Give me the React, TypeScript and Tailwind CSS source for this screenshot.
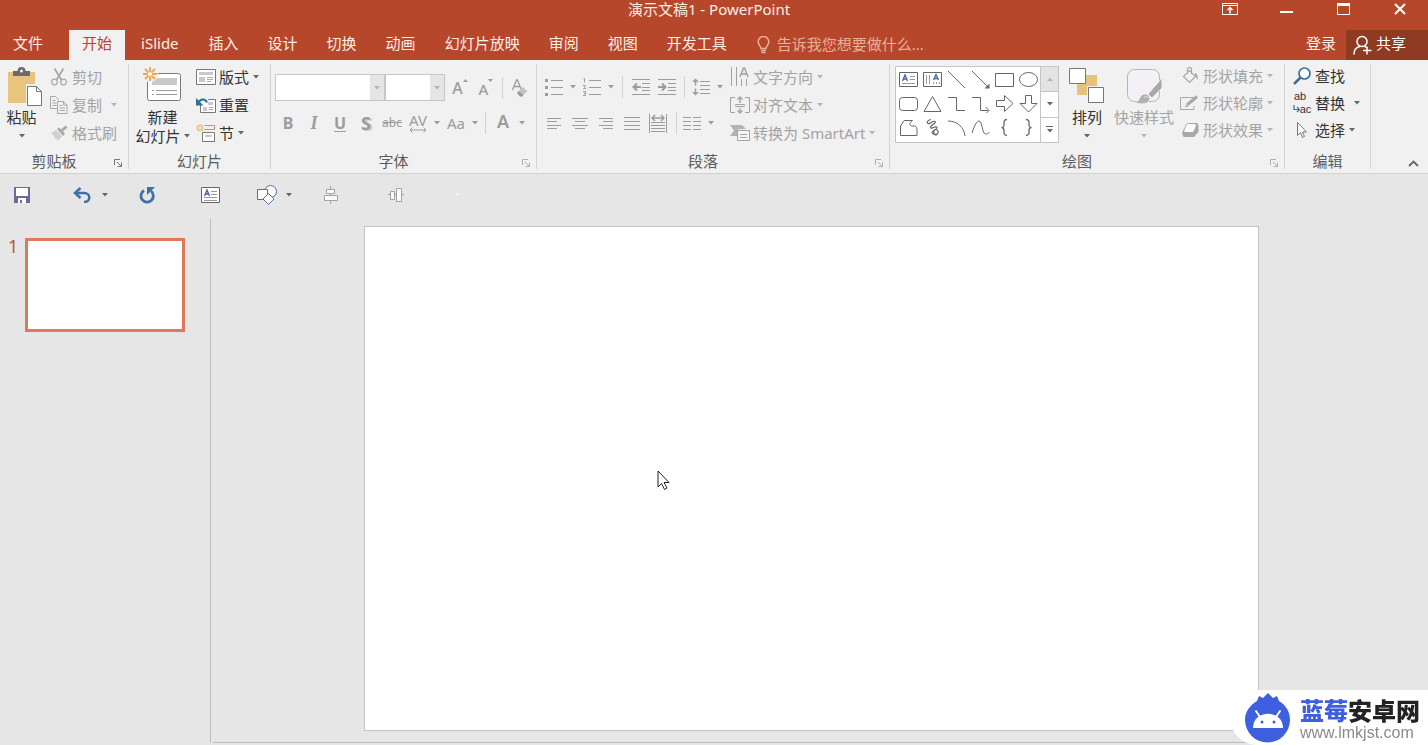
import type { ReactNode } from 'react';
import clsx from 'clsx';

const TABS = ['文件', '开始', 'iSlide', '插入', '设计', '切换', '动画', '幻灯片放映', '审阅', '视图', '开发工具'];

export default function App() {
  return (
    <div className="flex min-h-screen flex-col overflow-hidden bg-[#e6e6e6] font-['Noto_Sans','Noto_Sans_CJK_SC',sans-serif] text-[15px] leading-[20px] text-[#444444]">
      <TitleBar />
      <TabBar />
      <Ribbon />
      <QuickAccess />
      <Workspace />
      <Watermark />
    </div>
  );
}

/* ---------- shared bits ---------- */

function Svg({
  w,
  h,
  className,
  children,
}: {
  w: number;
  h: number;
  className?: string;
  children: ReactNode;
}) {
  return (
    <svg
      width={w}
      height={h}
      viewBox={`0 0 ${w} ${h}`}
      fill="none"
      stroke="currentColor"
      aria-hidden="true"
      className={clsx('shrink-0', className)}
    >
      {children}
    </svg>
  );
}

function Caret({ className }: { className?: string }) {
  return (
    <Svg w={6} h={4} className={className}>
      <path d="M0 0h6L3 3.5z" fill="currentColor" stroke="none" />
    </Svg>
  );
}

function CaretButton({ label }: { label: string }) {
  return (
    <button type="button" aria-label={label} className="flex h-[26px] w-[12px] items-center justify-center">
      <Caret />
    </button>
  );
}

function Tool({ label, children }: { label: string; children: ReactNode }) {
  return (
    <button type="button" aria-label={label} className="flex h-[26px] w-[26px] shrink-0 items-center justify-center">
      {children}
    </button>
  );
}

function RowButton({
  icon,
  label,
  caret,
  disabled,
  tall,
}: {
  icon: ReactNode;
  label: string;
  caret?: 'near' | 'far';
  disabled?: boolean;
  tall?: boolean;
}) {
  return (
    <button
      type="button"
      className={clsx(
        'flex items-center whitespace-nowrap',
        tall ? 'h-[28px]' : 'h-[27px]',
        disabled ? 'text-[#a3a3a3]' : 'text-[#333333]',
      )}
    >
      <span className="mr-[3px] flex w-[20px] justify-center">{icon}</span>
      {label}
      {caret && (
        <Caret
          className={clsx(caret === 'far' ? 'ml-[9px]' : 'ml-1', disabled ? 'text-[#b5b5b5]' : 'text-[#666666]')}
        />
      )}
    </button>
  );
}

function VLine({ className }: { className?: string }) {
  return <span className={clsx('h-[22px] w-px shrink-0 bg-[#d2d2d2]', className)} />;
}

function Group({
  title,
  width,
  launcher,
  children,
}: {
  title: string;
  width: string;
  launcher?: 'on' | 'off';
  children: ReactNode;
}) {
  return (
    <>
      <section aria-label={title} className={clsx('flex shrink-0 flex-col', width)}>
        <div className="flex h-[92px] items-start">{children}</div>
        <div className="flex h-[18px] items-center">
          <span className="flex-1 text-center text-[#5c5c5c]">{title}</span>
          {launcher && (
            <button
              type="button"
              aria-label={`${title}选项`}
              className={clsx('flex w-[20px] justify-center', launcher === 'on' ? 'text-[#777777]' : 'text-[#b0b0b0]')}
            >
              <Svg w={8} h={8} className="mt-1">
                <path d="M.5 6V.5H6M3 3l4 4M7.500 3.500v4h-4" />
              </Svg>
            </button>
          )}
        </div>
      </section>
      <span className="my-1 w-px shrink-0 bg-[#d4d4d4]" />
    </>
  );
}

/* ---------- title and tabs ---------- */

function TitleBar() {
  return (
    <header className="grid h-[30px] grid-cols-[1fr_auto_1fr] items-start bg-[#b7472a] text-[#fdeee6]">
      <span />
      <h1 className="pr-[10px] leading-[18px]">演示文稿1 - PowerPoint</h1>
      <div className="flex h-[18px] justify-end text-white">
        <button type="button" aria-label="功能区显示选项" className="flex w-[57px] items-center justify-center">
          <Svg w={16} h={12}>
            <path d="M.5.5h15v11H.5zM.5 2.500h15" />
            <path d="M8 10.500V5M5.500 7 8 4.500 10.500 7" strokeWidth="1.500" />
          </Svg>
        </button>
        <button type="button" aria-label="最小化" className="flex w-[57px] items-center justify-center">
          <Svg w={13} h={12}>
            <path d="M0 9h13" strokeWidth="2" />
          </Svg>
        </button>
        <button type="button" aria-label="最大化" className="flex w-[57px] items-center justify-center">
          <Svg w={13} h={12}>
            <path d="M.5 1.500h12v10H.5z" />
            <path d="M0 1.500h13" strokeWidth="3" />
          </Svg>
        </button>
        <button type="button" aria-label="关闭" className="flex w-[56px] items-center justify-center">
          <Svg w={12} h={12}>
            <path d="m1 1 10 10M11 1 1 11" strokeWidth="2" />
          </Svg>
        </button>
      </div>
    </header>
  );
}

function TabBar() {
  return (
    <nav className="flex h-[30px] items-stretch bg-[#b7472a] text-[#fdeee6]">
      <div role="tablist" className="flex gap-px">
        {TABS.map((tab) => (
          <button
            key={tab}
            type="button"
            role="tab"
            aria-selected={tab === '开始'}
            className={clsx(
              'pb-[4px] whitespace-nowrap',
              tab === '文件' && 'mr-[12px] px-[13px]',
              tab === '开始' && 'bg-[#f1f1f1] px-[13px] text-[#b7472a]',
              tab === 'iSlide' && 'px-[15px]',
              !['文件', '开始', 'iSlide'].includes(tab) && 'px-[14px]',
            )}
          >
            {tab}
          </button>
        ))}
      </div>
      <label className="ml-4 flex flex-1 items-center gap-[7px] text-[#eab09c]">
        <Svg w={13} h={18}>
          <path d="M4 12.500c0-2.500-2.800-3.500-2.800-6.700a5.300 5.300 0 0 1 10.600 0c0 3.200-2.800 4.200-2.800 6.700z" strokeWidth="1.500" />
          <path d="M4 14.500h5M4.500 16.500h4" strokeWidth="1.500" />
        </Svg>
        <input
          type="text"
          aria-label="操作说明搜索"
          placeholder="告诉我您想要做什么..."
          className="min-w-0 flex-1 bg-transparent pb-[2px] outline-none placeholder:text-[#eab09c]"
        />
      </label>
      <button type="button" className="pb-[4px] pr-[10px]">
        登录
      </button>
      <button type="button" className="flex items-center gap-1 bg-[#8f3a22] pl-[7px] pr-[22px] text-white">
        <Svg w={19} h={20}>
          <circle cx="9" cy="6.500" r="5" strokeWidth="1.500" />
          <path d="M1 19.500c0-4.500 2.500-7.500 6-8M11.500 11.500c1 .2 1.500.5 2 1M14 11.500v8M10 15.500h8.500" strokeWidth="1.500" />
        </Svg>
        <span className="pb-[4px]">共享</span>
      </button>
    </nav>
  );
}

/* ---------- ribbon ---------- */

function Ribbon() {
  return (
    <div className="flex h-[114px] items-stretch border-b border-[#d2d2d2] bg-[#f1f1f1]">
      <ClipboardGroup />
      <SlidesGroup />
      <FontGroup />
      <ParagraphGroup />
      <DrawingGroup />
      <EditingGroup />
      <div className="flex flex-1 items-end justify-end pb-[6px] pr-[9px]">
        <button type="button" aria-label="折叠功能区">
          <Svg w={11} h={7} className="text-[#666666]">
            <path d="M1 6l4.500-4.500L10 6" strokeWidth="1.800" />
          </Svg>
        </button>
      </div>
    </div>
  );
}

function BigButton({
  icon,
  lines,
  className,
  disabled,
}: {
  icon: ReactNode;
  lines: string[];
  className: string;
  disabled?: boolean;
}) {
  return (
    <button
      type="button"
      className={clsx('flex shrink-0 flex-col items-center pt-[7px]', className, disabled ? 'text-[#a3a3a3]' : 'text-[#333333]')}
    >
      <span className="h-[40px]">{icon}</span>
      <span>{lines[0]}</span>
      <span className="flex h-[18px] items-center gap-[3px] whitespace-nowrap">
        {lines[1]}
        <Caret className={disabled ? 'text-[#b5b5b5]' : 'text-[#666666]'} />
      </span>
    </button>
  );
}

function ClipboardGroup() {
  return (
    <Group title="剪贴板" width="w-[128px]" launcher="on">
      <BigButton
        className="w-[49px] pr-[6px]"
        lines={['粘贴']}
        icon={
          <Svg w={34} h={40} className="ml-[6px]">
            <path d="M0 5h27v31H0z" fill="#e8c47c" stroke="none" />
            <path d="M5 9V4h4.500a4 4 0 0 1 8 0H22v5z" fill="#6b6b6b" stroke="none" />
            <circle cx="13.500" cy="4" r="1.500" fill="#f1f1f1" stroke="none" />
            <path d="M18 17h11l6 6v17H18z" fill="#f1f1f1" stroke="none" />
            <path d="M19.500 19.500h9l5 5v14h-14z" fill="#fff" stroke="#777" />
            <path d="M28.500 19.500v5h5" stroke="#777" />
          </Svg>
        }
      />
      <div className="flex flex-col pt-[3px]">
        <RowButton
          tall
          disabled
          label="剪切"
          icon={
            <Svg w={16} h={18} className="text-[#a8a8a8]">
              <path d="M3.500.5l7 11.500M12.500.5l-7 11.500" strokeWidth="1.800" />
              <circle cx="3.500" cy="14" r="2.800" strokeWidth="1.200" />
              <circle cx="12.500" cy="14" r="2.800" strokeWidth="1.200" />
            </Svg>
          }
        />
        <RowButton
          tall
          disabled
          label="复制"
          caret="far"
          icon={
            <Svg w={18} h={18} className="text-[#a8a8a8]">
              <path d="M7.500 12.500h-7V.5h5l3 3v1M2.500 4.500h3M2.500 7h4M2.500 9.500h4" />
              <path d="M7.500 5.500h6l3.500 3.500v8.500H7.500zM13.500 5.500V9H17M9.500 9.500h2.500M9.500 12h5.500M9.500 14.500h5.500" />
            </Svg>
          }
        />
        <RowButton
          tall
          disabled
          label="格式刷"
          icon={
            <Svg w={17} h={16} className="text-[#a8a8a8]">
              <path d="M0 8l5-3 6 6-4 5-2-3-1 1-1-3z" fill="#cfcfcf" stroke="none" />
              <path d="M6 4l2-1.500 6 6L12 11z" fill="currentColor" stroke="none" />
              <path d="M11 5.500l4.500-4" strokeWidth="3" />
            </Svg>
          }
        />
      </div>
    </Group>
  );
}

function SlidesGroup() {
  return (
    <Group title="幻灯片" width="w-[141px]">
      <BigButton
        className="w-[67px]"
        lines={['新建', '幻灯片']}
        icon={
          <Svg w={40} h={36} className="mr-[2px]">
            <rect x="5.500" y="6.500" width="33" height="27" rx="2" fill="#fff" stroke="#7a7a7a" />
            <path d="M10 11h25v7H10z" fill="#c9c9c9" stroke="none" />
            <path d="M10 23.500h2M14 23.500h21M10 27.500h2M14 27.500h21" stroke="#999" />
            <circle cx="8" cy="7" r="8" fill="#f1f1f1" stroke="none" />
            <path d="M8 0v4M8 10v4M1 7h4M11 7h4M3 2l3 3M10 9l3 3M13 2l-3 3M6 9l-3 3" stroke="#eda550" strokeWidth="1.800" />
            <circle cx="8" cy="7" r="2.500" fill="#fff" stroke="#eda550" />
          </Svg>
        }
      />
      <div className="flex flex-col pt-[3px]">
        <RowButton
          tall
          label="版式"
          caret="near"
          icon={
            <Svg w={20} h={16} className="text-[#777777]">
              <path d="M.5.5h19v15H.5z" fill="#fff" />
              <path d="M3 3h14v3H3zM3 8h6v5H3z" fill="#c9c9c9" stroke="none" />
              <path d="M11 8.500h6M11 10.500h6M11 12.500h4" stroke="#aaa" />
            </Svg>
          }
        />
        <RowButton
          tall
          label="重置"
          icon={
            <Svg w={20} h={17} className="text-[#777777]">
              <path d="M4.500 2.500h15v13h-15z" fill="#fff" />
              <path d="M12 5h5v3h-5zM7 10h4v4H7z" fill="#c9c9c9" stroke="none" />
              <path d="M13 10.500h4M13 12.500h4" stroke="#aaa" />
              <path d="M2 7c1-5 7-6.500 9-1.500" stroke="#f1f1f1" strokeWidth="5" />
              <path d="M2 7c1-5 7-6.500 9-1.500" stroke="#2f7096" strokeWidth="2" />
              <path d="M0 1v7.500h7.500z" fill="#2f7096" stroke="none" />
            </Svg>
          }
        />
        <RowButton
          tall
          label="节"
          caret="near"
          icon={
            <Svg w={20} h={18} className="text-[#777777]">
              <path d="M8.500 1.500h10v4h-10" stroke="#e08a5a" />
              <path d="M6.500 8.500h12v9h-12z" fill="#fff" />
              <path d="M9 11h7v2H9z" fill="#c9c9c9" stroke="none" />
              <path d="M4 0v3M4 5v3M0 4h3M5 4h3M1 1l2 2M5 5l2 2M7 1L5 3M3 5L1 7" stroke="#eda550" />
            </Svg>
          }
        />
      </div>
    </Group>
  );
}

function Combo({ label, width }: { label: string; width: string }) {
  return (
    <div className={clsx('relative h-[27px]', width)}>
      <select aria-label={label} disabled className="h-full w-full appearance-none border border-[#c6c6c6] bg-white" />
      <span className="pointer-events-none absolute inset-y-px right-px flex w-[14px] items-center justify-center bg-[#e5e5e5] text-[#b5b5b5]">
        <Caret />
      </span>
    </div>
  );
}

function FontGroup() {
  return (
    <Group title="字体" width="w-[265px]" launcher="off">
      <div className="flex flex-col gap-[9px] pl-1 pt-[14px] text-[#9c9c9c]">
        <div className="flex items-center">
          <Combo label="字体" width="w-[110px]" />
          <Combo label="字号" width="w-[60px]" />
          <span className="flex pl-[2px]">
            <Tool label="增大字号">
              <span className="text-[16px] font-medium">A</span>
              <Svg w={5} h={3} className="mb-[14px]">
                <path d="M0 3h5L2.500 0z" fill="currentColor" stroke="none" />
              </Svg>
            </Tool>
            <Tool label="减小字号">
              <span className="pt-[2px] text-[15px] font-medium">A</span>
              <Svg w={5} h={3} className="mb-[14px]">
                <path d="M0 0h5L2.500 3z" fill="currentColor" stroke="none" />
              </Svg>
            </Tool>
          </span>
          <VLine className="ml-[3px]" />
          <span className="ml-1 flex">
            <Tool label="清除所有格式">
              <Svg w={16} h={18}>
                <path d="M.5 11L4.500 1h1l3.500 9M2 7.500h6" strokeWidth="1.300" />
                <path d="M5 14l5.500-6 5 4-5.500 5.500H8z" fill="#c4c4c4" stroke="none" />
                <path d="M5 14l2-2 4.500 4L10 17.500H8z" fill="currentColor" stroke="none" />
              </Svg>
            </Tool>
          </span>
        </div>
        <div className="flex items-center text-[16px]">
          <Tool label="加粗">
            <b>B</b>
          </Tool>
          <Tool label="倾斜">
            <i className="font-['Liberation_Serif',serif] text-[18px] font-bold">I</i>
          </Tool>
          <Tool label="下划线">
            <span className="border-b border-current font-bold leading-[16px]">U</span>
          </Tool>
          <Tool label="文字阴影">
            <b className="text-[18px] [text-shadow:2px_1px_1px_#c8c8c8]">S</b>
          </Tool>
          <Tool label="删除线">
            <s className="text-[12px]">abc</s>
          </Tool>
          <Tool label="字符间距">
            <span className="flex flex-col items-center">
              <span className="text-[15px] leading-[13px]">AV</span>
              <Svg w={18} h={6}>
                <path d="M1 3h16M3.500.5L1 3l2.500 2.500M14.500.5L17 3l-2.500 2.500" />
              </Svg>
            </span>
          </Tool>
          <CaretButton label="字符间距选项" />
          <Tool label="更改大小写">
            <span className="text-[15px]">Aa</span>
          </Tool>
          <CaretButton label="更改大小写选项" />
          <VLine className="mx-1" />
          <Tool label="字体颜色">
            <span className="pb-1 text-[18px] font-semibold">A</span>
          </Tool>
          <CaretButton label="字体颜色选项" />
        </div>
      </div>
    </Group>
  );
}

function ParagraphGroup() {
  return (
    <Group title="段落" width="w-[352px]" launcher="off">
      <div className="flex w-[193px] flex-col gap-[10px] pl-1 pt-[14px] text-[#9c9c9c]">
        <div className="flex h-[26px] items-center">
          <Tool label="项目符号">
            <Svg w={18} h={17}>
              <path d="M6 1.500h12M6 8.500h12M6 15.500h12" />
              <path d="M0 1.500h3M0 8.500h3M0 15.500h3" strokeWidth="3" />
            </Svg>
          </Tool>
          <CaretButton label="项目符号选项" />
          <Tool label="编号">
            <Svg w={18} h={18}>
              <path d="M6 2.500h12M6 9.500h12M6 16.500h12" />
              <path d="M.5 1l1-.5v4M0 7.500h2.500v1L.5 10.500h2.500M0 13.500h2.500v4H0M1 15.500h1.500" />
            </Svg>
          </Tool>
          <CaretButton label="编号选项" />
          <VLine className="ml-[5px]" />
          <span className="ml-[5px] flex">
            <Tool label="降低列表级别">
              <Svg w={18} h={16}>
                <path d="M0 .5h18M10 4.500h8M10 8.500h8M10 11.500h8M0 15.500h18" />
                <path d="M2 8h7M5 4.500L1.500 8 5 11.500" strokeWidth="2" />
              </Svg>
            </Tool>
            <Tool label="提高列表级别">
              <Svg w={18} h={16}>
                <path d="M0 .5h18M10 4.500h8M10 8.500h8M10 11.500h8M0 15.500h18" />
                <path d="M0 8h7M4 4.500L7.500 8 4 11.500" strokeWidth="2" />
              </Svg>
            </Tool>
          </span>
          <VLine className="ml-1" />
          <span className="ml-[3px] flex">
            <Tool label="行距">
              <Svg w={18} h={18}>
                <path d="M8 3.500h10M8 7.500h10M8 11.500h10M8 15.500h10" />
                <path d="M3.500 1.500v6M1 4l2.500-2.500L6 4M3.500 10.500v6M1 14l2.500 2.500L6 14" strokeWidth="1.500" />
              </Svg>
            </Tool>
            <CaretButton label="行距选项" />
          </span>
        </div>
        <div className="flex items-center">
          <Tool label="左对齐">
            <Svg w={14} h={11}>
              <path d="M0 .5h14M0 3.500h10M0 7.500h14M0 10.500h10" />
            </Svg>
          </Tool>
          <Tool label="居中">
            <Svg w={16} h={11}>
              <path d="M0 .5h16M3 3.500h10M0 7.500h16M3 10.500h10" />
            </Svg>
          </Tool>
          <Tool label="右对齐">
            <Svg w={14} h={11}>
              <path d="M0 .5h14M4 3.500h10M0 7.500h14M4 10.500h10" />
            </Svg>
          </Tool>
          <Tool label="两端对齐">
            <Svg w={16} h={13}>
              <path d="M0 .5h16M0 4.500h16M0 8.500h16M0 12.500h16" />
            </Svg>
          </Tool>
          <Tool label="分散对齐">
            <Svg w={18} h={19}>
              <path d="M.5 0v19M17.500 0v19M2 8.500h14M2 11.500h14M2 14.500h14M2 17.500h14" />
              <path d="M3 4h12M6 1L3 4l3 3M12 1l3 3-3 3" strokeWidth="1.500" />
            </Svg>
          </Tool>
          <VLine className="ml-[5px] mr-[2px]" />
          <Tool label="分栏">
            <Svg w={18} h={13}>
              <path d="M0 .5h8M0 4.500h8M0 8.500h8M0 12.500h8M10 .5h8M10 4.500h8M10 8.500h8M10 12.500h8" />
            </Svg>
          </Tool>
          <CaretButton label="分栏选项" />
        </div>
      </div>
      <div className="flex flex-col pt-[3px]">
        <RowButton
          tall
          disabled
          label="文字方向"
          caret="near"
          icon={
            <Svg w={20} h={20} className="text-[#a3a3a3]">
              <path d="M1.500 0v19M6.500 0v19M11.500 12v7M16.500 12v7" />
              <path d="M10 10l3.500-9h1L18 10M11 7h6" strokeWidth="1.500" />
            </Svg>
          }
        />
        <RowButton
          tall
          disabled
          label="对齐文本"
          caret="near"
          icon={
            <Svg w={20} h={18} className="text-[#a3a3a3]">
              <path d="M5 1.500H.5v15H5M15 1.500h4.500v15H15M5 8.500h10M5 10.500h10" />
              <path d="M10 1v6M7.500 3.500L10 1l2.500 2.500M10 12v5M7.500 14.500L10 17l2.500-2.500" strokeWidth="1.400" />
            </Svg>
          }
        />
        <RowButton
          tall
          disabled
          label="转换为 SmartArt"
          caret="near"
          icon={
            <Svg w={20} h={16} className="text-[#a3a3a3]">
              <path d="M0 0h12l4 4H8l-1 7H0l4-5.500z" fill="#b3b3b3" stroke="none" />
              <path d="M7.500 5.500h12v10h-12z" fill="#f6f6f6" />
              <path d="M10 9.500h7M10 12.500h7" />
            </Svg>
          }
        />
      </div>
    </Group>
  );
}

const SHAPES: { name: string; art: ReactNode }[] = [
  {
    name: '文本框',
    art: (
      <>
        <path d="M.5 2.500h18v14H.5z" />
        <path d="M3.500 11L6 5l2.500 6M4.500 9h3" stroke="#3f669e" strokeWidth="1.300" />
        <path d="M11 6.500h5M11 9.500h5M3 13.500h13" stroke="#999" />
      </>
    ),
  },
  {
    name: '竖排文本框',
    art: (
      <>
        <path d="M.5 2.500h18v14H.5z" />
        <path d="M10.500 10L13 4.500l2.500 5.500M11.500 8.500h3" stroke="#3f669e" strokeWidth="1.300" />
        <path d="M3.500 5v9M6.500 5v9M10.500 12v2M13.500 12v2M16.500 12v2" stroke="#999" />
      </>
    ),
  },
  { name: '直线', art: <path d="M1 1l17 17" /> },
  {
    name: '箭头',
    art: (
      <>
        <path d="M1 1l16.500 16.500" />
        <path d="M18.500 18.500v-5l-5 5z" fill="currentColor" stroke="none" />
      </>
    ),
  },
  { name: '矩形', art: <path d="M.5 3.500h18v13H.5z" /> },
  { name: '椭圆', art: <ellipse cx="9.500" cy="9.500" rx="9" ry="7" /> },
  { name: '圆角矩形', art: <rect x=".5" y="3.500" width="18" height="13" rx="3" /> },
  { name: '三角形', art: <path d="M9.500 2.500l8.500 15H1z" /> },
  { name: '肘形连接符', art: <path d="M1 3.500h8.500v13H18" /> },
  {
    name: '肘形箭头',
    art: (
      <>
        <path d="M1 3.500h8.500v13H17" />
        <path d="M14.500 13l3.500 3.500-3.500 3.500" />
      </>
    ),
  },
  { name: '右箭头', art: <path d="M1.500 6.500h8v-5l8.500 8-8.500 8v-5h-8z" /> },
  { name: '下箭头', art: <path d="M6.500 1.500h6v8H18l-8.500 8.500L1 9.500h5.500z" /> },
  { name: '任意多边形', art: <path d="M1.500 17.500V8L5 2.500h8.500c-4 3-3 5.500 0 5.500 3-.5 4.500 1 4.500 3.500v6z" /> },
  {
    name: '自由曲线',
    art: <path d="M8 1.500C5 2 3 4.500 5 5.500s5-3.500 7-2-5 4-4.500 6 6-2 6.500 0-5.500 3-5 5 5 3 6 .5-2-4.500-3.500-3-.5 4.500 2 5.500" strokeWidth="1.200" />,
  },
  { name: '弧形', art: <path d="M1 3c9 0 16 6 17 15" /> },
  { name: '曲线', art: <path d="M1 15C4 6 6 3 8 3c3.500 0 3 13 6.500 13 1.500 0 2.500-.5 4-1.500" /> },
  { name: '左大括号', art: <path d="M12 1.500C8.500 1.500 9 4 9 6.500S8.500 9.500 6.500 9.500c2 0 2.500 1 2.500 3s-.5 5 3 5" strokeWidth="1.300" /> },
  { name: '右大括号', art: <path d="M7 1.500c3.500 0 3 2.500 3 5s.5 3 2.500 3c-2 0-2.500 1-2.500 3s.5 5-3 5" strokeWidth="1.300" /> },
];

function DrawingGroup() {
  return (
    <Group title="绘图" width="w-[394px]" launcher="off">
      <div className="ml-[5px] mt-[6px] flex h-[77px] shrink-0 border border-[#c6c6c6] bg-white">
        <div className="grid grid-cols-[repeat(6,24px)] grid-rows-[repeat(3,24px)] text-[#666666]">
          {SHAPES.map((s) => (
            <button key={s.name} type="button" aria-label={s.name} className="flex items-center justify-center">
              <Svg w={19} h={19}>{s.art}</Svg>
            </button>
          ))}
        </div>
        <div className="flex w-[18px] flex-col border-l border-[#c6c6c6]">
          <button type="button" aria-label="上一行" className="flex flex-1 items-center justify-center bg-[#e3e3e3] text-[#b5b5b5]">
            <Caret className="rotate-180" />
          </button>
          <button
            type="button"
            aria-label="下一行"
            className="flex flex-1 items-center justify-center border-y border-[#c6c6c6] text-[#666666]"
          >
            <Caret />
          </button>
          <button type="button" aria-label="其他" className="flex flex-1 flex-col items-center justify-center gap-[2px] text-[#666666]">
            <span className="h-px w-[7px] bg-current" />
            <Caret />
          </button>
        </div>
      </div>
      <BigButton
        className="ml-1 w-[48px]"
        lines={['排列']}
        icon={
          <Svg w={36} h={36}>
            <path d="M9 8h19v11H18v9H8V17z" fill="#e9c27a" stroke="none" />
            <path d="M.5 1.500h16v15H.5zM19.500 20.500h15v15h-15z" fill="#fff" stroke="#777" />
          </Svg>
        }
      />
      <BigButton
        disabled
        className="w-[66px]"
        lines={['快速样式']}
        icon={
          <Svg w={38} h={38}>
            <rect x="2.500" y="2.500" width="32" height="32" rx="7" fill="#f3f0f6" stroke="#b5b5b5" />
            <path d="M37 11v10L27 31l-4-4z" fill="#a8a8a8" stroke="#f1f1f1" />
            <path d="M10 36c5-1 4-9 10-9 4 0 6 4 4 7-3 4-10 3-14 2z" fill="#b0b0b0" stroke="#f1f1f1" />
            <path d="M19 31c1-2 3-2 4 0" stroke="#f1f1f1" />
          </Svg>
        }
      />
      <div className="flex flex-col pl-[3px] pt-[2px]">
        <RowButton
          disabled
          label="形状填充"
          caret="near"
          icon={
            <Svg w={18} h={17} className="text-[#a8a8a8]">
              <path d="M8.500 3.500l6 6-6 6-6-6zM6.500 7V2.500a2 2 0 0 1 4 0V7" strokeWidth="1.200" />
              <path d="M14 6c3 1 3 4 2.500 7-1-2-1-3-2.500-4z" fill="currentColor" stroke="none" />
            </Svg>
          }
        />
        <RowButton
          disabled
          label="形状轮廓"
          caret="near"
          icon={
            <Svg w={20} h={16} className="text-[#a8a8a8]">
              <path d="M14 2.500H.5v12H14V11" />
              <path d="M7 10L17 1.500" strokeWidth="3" />
              <path d="M5 12.500l1-3 2 2z" fill="currentColor" stroke="none" />
            </Svg>
          }
        />
        <RowButton
          disabled
          label="形状效果"
          caret="near"
          icon={
            <Svg w={18} h={16} className="text-[#a8a8a8]">
              <path d="M1 11L5 2.500 7 1h9l1.500 2v7L13 15H2.500z" fill="#a8a8a8" stroke="none" />
              <path d="M6.500 2h7.500l1 1.500-2.500 6-1 .5H4L3 9l2.500-6z" fill="#fafafa" stroke="none" />
            </Svg>
          }
        />
      </div>
    </Group>
  );
}

function EditingGroup() {
  return (
    <Group title="编辑" width="w-[85px]">
      <div className="flex flex-col pl-[7px] pt-[2px]">
        <RowButton
          label="查找"
          icon={
            <Svg w={18} h={18} className="text-[#3d6f9e]">
              <circle cx="11.500" cy="6.500" r="5.500" fill="#fff" strokeWidth="1.700" />
              <path d="M7.500 10.500L1 17" strokeWidth="2.500" />
            </Svg>
          }
        />
        <RowButton
          label="替换"
          caret="far"
          icon={
            <span className="flex flex-col font-['Liberation_Sans',sans-serif] text-[11px] leading-[13px]">
              <span className="pr-1">ab</span>
              <span className="flex items-center">
                <Svg w={7} h={8} className="text-[#3d6f9e]">
                  <path d="M1 0v4.500h5M4 2l2.500 2.500L4 7" strokeWidth="1.200" />
                </Svg>
                ac
              </span>
            </span>
          }
        />
        <RowButton
          label="选择"
          caret="near"
          icon={
            <Svg w={12} h={18} className="text-[#777777]">
              <path d="M1.500 1.500v13l3-3 2 5 2-1-2-4.500h4z" fill="#fff" />
            </Svg>
          }
        />
      </div>
    </Group>
  );
}

/* ---------- quick access toolbar ---------- */

function QuickAccess() {
  return (
    <div role="toolbar" aria-label="快速访问工具栏" className="flex h-[42px] shrink-0 items-center pl-[9px] text-[#666666]">
      <Tool label="保存">
        <Svg w={16} h={16}>
          <path d="M0 0h16v16H0z" fill="#7465a0" stroke="none" />
          <path d="M2 1h12v8H2zM4 11h8v5H4z" fill="#fff" stroke="none" />
          <path d="M6 13h2v3H6z" fill="#7465a0" stroke="none" />
        </Svg>
      </Tool>
      <span className="ml-[34px] flex items-center gap-1">
        <Tool label="撤消">
          <Svg w={18} h={16} className="text-[#3e6fa6]">
            <path d="M2 6h9c7 0 7 9 0 9" strokeWidth="2.500" />
            <path d="M7.500 1L2 6l5.500 5" strokeWidth="2.500" />
          </Svg>
        </Tool>
        <CaretButton label="撤消选项" />
      </span>
      <span className="ml-[23px] flex">
        <Tool label="恢复">
          <Svg w={18} h={17} className="text-[#3e6fa6]">
            <path d="M6 3.500a6.200 6.200 0 1 0 7 .5" strokeWidth="2.800" />
            <path d="M9 0h8l-8 8z" fill="currentColor" stroke="none" />
          </Svg>
        </Tool>
      </span>
      <span className="ml-[37px] flex">
        <Tool label="文本框">
          <Svg w={19} h={16}>
            <path d="M.5.5h18v15H.5z" fill="#fff" />
            <path d="M3.500 9L6 3l2.500 6M4.500 7h3" stroke="#3f669e" strokeWidth="1.300" />
            <path d="M10 4.500h6M10 7.500h6M3 10.500h13M3 13.500h13" stroke="#999" />
          </Svg>
        </Tool>
      </span>
      <span className="ml-[31px] flex items-center gap-[3px]">
        <Tool label="形状">
          <Svg w={20} h={20} className="text-[#4f719c]">
            <circle cx="13.500" cy="6.500" r="6" fill="#f5f8fb" />
            <path d="M.5 4.500h10v10H.5z" fill="#fff" />
            <path d="M11.500 8.500l5.500 5.500-5.500 5.500L6 14z" fill="#fff" />
          </Svg>
        </Tool>
        <CaretButton label="形状选项" />
      </span>
      <span className="ml-[23px] flex text-[#a3a3a3]">
        <Tool label="水平居中">
          <Svg w={14} h={18}>
            <path d="M6.500 0v3M6.500 7v3M6.500 14v4" />
            <path d="M2.500 3.500h8v4h-8zM.5 9.500h13v5H.5z" fill="#fafafa" />
          </Svg>
        </Tool>
      </span>
      <span className="ml-[39px] flex text-[#a3a3a3]">
        <Tool label="垂直居中">
          <Svg w={16} h={14}>
            <path d="M0 6.500h2M7 6.500h2M14 6.500h2" />
            <path d="M2.500 3.500h4v8h-4zM8.500.5h5v13h-5z" fill="#fafafa" />
          </Svg>
        </Tool>
      </span>
      <span className="ml-[42px] flex text-[#f1f1f1]">
        <CaretButton label="自定义快速访问工具栏" />
      </span>
    </div>
  );
}

/* ---------- slides ---------- */

function Workspace() {
  return (
    <main className="flex flex-1 pb-[2px] pt-[3px]">
      <aside aria-label="幻灯片缩略图" className="flex w-[211px] shrink-0 items-start border-r border-[#bdbdbd] pt-[19px]">
        <span className="w-[25px] pl-2 text-[18px] leading-[16px] text-[#b85a3c]">1</span>
        <button type="button" aria-label="第 1 张幻灯片" className="h-[94px] w-[160px] border-[3px] border-[#de7a5a] bg-white" />
      </aside>
      <div className="ml-[2px] flex-1 border-b border-[#bdbdbd] pl-[151px] pr-[169px] pt-[7px]">
        <div className="relative aspect-[895/505] w-full border border-[#c3c3c3] bg-white">
          <Svg w={13} h={21} className="absolute left-[292px] top-[243px]">
            <path d="M1 1v16l3.500-3.500L7.500 19.500l2.500-1.500-3-5.500h5z" fill="#fff" stroke="#222" />
          </Svg>
        </div>
      </div>
    </main>
  );
}

function Watermark() {
  return (
    <div className="fixed bottom-0 right-0 flex h-[55px] items-center gap-[9px] rounded-l-full bg-white pl-[15px] pr-[8px]">
      <Svg w={46} h={50}>
        <path
          d="M12 8l2-5 4 2 5-5 5 5 4-2 2 5c7 4 11 11 11 19a22.500 22.500 0 0 1-45 0C0 19 5 12 12 8z"
          fill="#3d5fe0"
          stroke="none"
        />
        <path d="M8 35c0-19 30-19 30 0z" fill="#fff" stroke="none" />
        <path d="M11 18l4 6M35 18l-4 6" stroke="#fff" strokeWidth="2" strokeLinecap="round" />
        <circle cx="17" cy="29" r="1.500" fill="#3d5fe0" stroke="none" />
        <circle cx="29" cy="29" r="1.500" fill="#3d5fe0" stroke="none" />
      </Svg>
      <div>
        <p className="font-['Noto_Sans_CJK_SC',sans-serif] text-[24px] font-black leading-[30px] text-[#222222]">
          <span className="text-[#3d5fe0]">蓝莓</span>安卓网
        </p>
        <p className="font-['Liberation_Sans',sans-serif] text-[16px] leading-[16px] text-[#8a8a8a]">www.lmkjst.com</p>
      </div>
    </div>
  );
}
